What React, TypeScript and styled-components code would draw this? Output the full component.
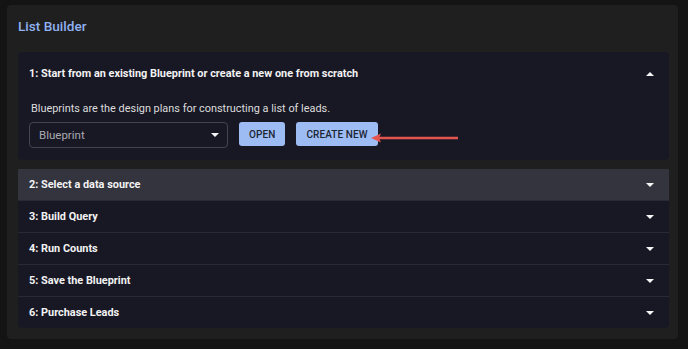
import React from "react";
import styled, { createGlobalStyle } from "styled-components";

const GlobalStyle = createGlobalStyle`
  html, body {
    margin: 0;
    background: #141414;
    font-family: Roboto, "Liberation Sans", sans-serif;
  }
`;

const Panel = styled.div`
  margin: 5px 10px 10px 7px;
  height: 334px;
  box-sizing: border-box;
  background: #1f1f1f;
  border-radius: 4px;
  padding: 11px 9px 0 11px;
`;

const Title = styled.h1`
  margin: 0 0 16px;
  font-size: 13.6px;
  font-weight: 500;
  line-height: 20px;
  color: #8fb2f0;
`;

const Section = styled.div<{ $expanded?: boolean }>`
  background: #181824;
  margin-bottom: ${(p) => (p.$expanded ? "9px" : "0")};
  border-radius: ${(p) => (p.$expanded ? "4px" : "0")};
  border-bottom: ${(p) => (p.$expanded ? "none" : "1px solid #2a2a36")};

  &:last-child {
    border-bottom: none;
    border-radius: 0 0 4px 4px;
  }
`;

const Header = styled.div<{ $active?: boolean; $tall?: boolean }>`
  display: flex;
  align-items: center;
  justify-content: space-between;
  box-sizing: border-box;
  height: ${(p) => (p.$tall ? "43px" : "31px")};
  padding: 1px 15px 0 11px;
  background: ${(p) => (p.$active ? "#34343f" : "transparent")};
  color: #f2f2f2;
  font-size: 10.9px;
  font-weight: 700;
  line-height: 1;
`;

const Details = styled.div`
  padding: 6px 11px 12px;
`;

const Description = styled.p`
  margin: 0 0 5px 2px;
  font-size: 10.9px;
  line-height: 16px;
  color: #dcdcdc;
`;

const Controls = styled.div`
  display: flex;
  align-items: flex-start;
  gap: 11px;
`;

const Select = styled.div`
  width: 199px;
  height: 26px;
  box-sizing: border-box;
  border: 1px solid #44444e;
  border-radius: 4px;
  display: flex;
  align-items: center;
  justify-content: space-between;
  padding: 0 8px 0 9px;
  font-size: 11.5px;
  color: #a9a9b0;
`;

const Button = styled.button`
  height: 24px;
  padding: 0 10px;
  border: none;
  border-radius: 3px;
  background: #9ebcf4;
  color: #1c2533;
  font-family: inherit;
  font-size: 10px;
  font-weight: 500;
  letter-spacing: 0.1px;
  cursor: pointer;
`;

const ArrowWrap = styled.div`
  position: relative;
  margin-left: -18px;
  margin-top: 11px;
  line-height: 0;
`;

function Caret({ up }: { up?: boolean }) {
  return (
    <svg width="8" height="4" viewBox="0 0 8 4">
      <path d={up ? "M0 4 L4 0 L8 4 Z" : "M0 0 L4 4 L8 0 Z"} fill="#f5f5f5" />
    </svg>
  );
}

const steps = [
  "2: Select a data source",
  "3: Build Query",
  "4: Run Counts",
  "5: Save the Blueprint",
  "6: Purchase Leads",
];

export default function App() {
  return (
    <>
      <GlobalStyle />
      <Panel>
        <Title>List Builder</Title>
        <Section $expanded>
          <Header $tall>
            <span>1: Start from an existing Blueprint or create a new one from scratch</span>
            <Caret up />
          </Header>
          <Details>
            <Description>Blueprints are the design plans for constructing a list of leads.</Description>
            <Controls>
              <Select>
                <span>Blueprint</span>
                <Caret />
              </Select>
              <Button>OPEN</Button>
              <Button>CREATE NEW</Button>
              <ArrowWrap>
                <svg width="88" height="10" viewBox="0 0 88 10">
                  <line x1="6" y1="5" x2="87" y2="5" stroke="#e5554f" strokeWidth="2.5" />
                  <path d="M0 5 L10 0.5 L8 5 L10 9.5 Z" fill="#e5554f" />
                </svg>
              </ArrowWrap>
            </Controls>
          </Details>
        </Section>
        {steps.map((s, i) => (
          <Section key={s}>
            <Header $active={i === 0}>
              <span>{s}</span>
              <Caret />
            </Header>
          </Section>
        ))}
      </Panel>
    </>
  );
}
